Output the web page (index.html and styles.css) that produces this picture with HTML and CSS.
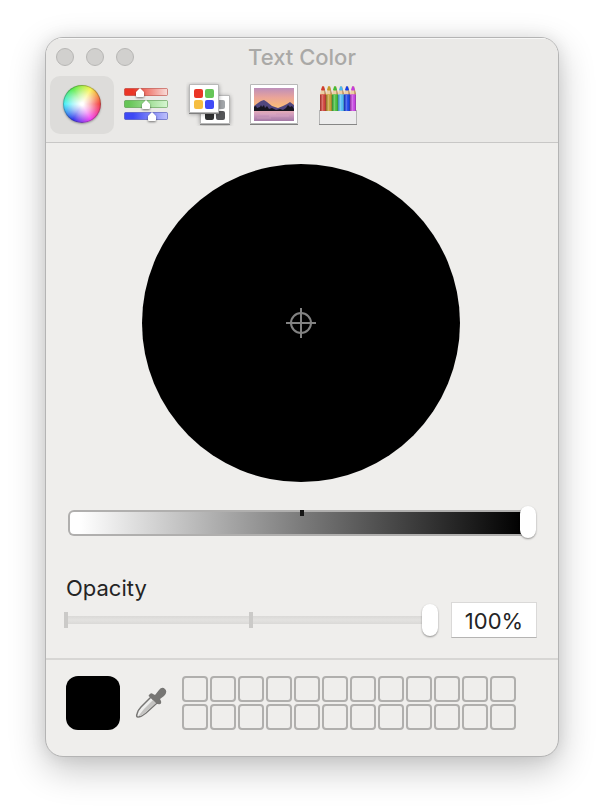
FILE: index.html
```html
<!DOCTYPE html>
<html lang="en">
<head>
<meta charset="utf-8">
<meta name="viewport" content="width=device-width, initial-scale=1">
<title>Text Color</title>
<link rel="stylesheet" href="styles.css">
</head>
<body>
<main class="window">
  <header class="header">
    <div class="titlebar">
      <div class="lights">
        <button class="light" type="button" aria-label="Close"></button>
        <button class="light" type="button" aria-label="Minimize"></button>
        <button class="light" type="button" aria-label="Zoom"></button>
      </div>
      <h1 class="title">Text Color</h1>
    </div>
    <nav class="toolbar" aria-label="Color pickers">
      <button class="tab tab-active" type="button" aria-label="Color Wheel"><span class="wheel-icon"></span></button>
      <button class="tab" type="button" aria-label="Color Sliders">
        <svg class="icon" width="48" height="44" viewBox="0 0 48 44">
          <defs>
            <linearGradient id="red"><stop offset=".2" stop-color="#ea3526"/><stop offset="1" stop-color="#f8dedb"/></linearGradient>
            <linearGradient id="green"><stop offset=".1" stop-color="#66c557"/><stop offset="1" stop-color="#d7f6d2"/></linearGradient>
            <linearGradient id="blue"><stop offset=".2" stop-color="#3d49f5"/><stop offset="1" stop-color="#bfc1fb"/></linearGradient>
          </defs>
          <rect x="2.5" y="6.5" width="43" height="7" rx="1" fill="url(#red)" stroke="#b3261b" stroke-opacity=".5"/>
          <rect x="2.5" y="18.5" width="43" height="7" rx="1" fill="url(#green)" stroke="#3b8a30" stroke-opacity=".5"/>
          <rect x="2.5" y="30.5" width="43" height="7" rx="1" fill="url(#blue)" stroke="#2b33b0" stroke-opacity=".5"/>
          <g class="knobs">
            <path d="M18 6 22 10V14Q22 15 21 15H15Q14 15 14 14V10Z"/>
            <path d="M24 18 28 22V26Q28 27 27 27H21Q20 27 20 26V22Z"/>
            <path d="M30 30 34 34V38Q34 39 33 39H27Q26 39 26 38V34Z"/>
          </g>
        </svg>
      </button>
      <button class="tab" type="button" aria-label="Color Palettes">
        <svg class="icon" width="48" height="44" viewBox="0 0 48 44">
          <g class="card"><path d="M14.500 13.500h29v28h-29z" fill="#fff" stroke="#b8b8b8"/></g>
          <path d="M14 42.500h30" stroke="#808080"/>
          <rect x="30" y="18" width="9" height="9" rx="2" fill="#a2a6aa"/>
          <rect x="19" y="29" width="9" height="9" rx="2" fill="#303132"/>
          <rect x="30" y="29" width="9" height="9" rx="2" fill="#555659"/>
          <g class="card"><path d="M3.500 2.500h29v28h-29z" fill="#fff" stroke="#b8b8b8"/></g>
          <path d="M3 31.500h30" stroke="#808080"/>
          <rect x="8" y="7" width="9" height="9" rx="2" fill="#ea3526"/>
          <rect x="19" y="7" width="9" height="9" rx="2" fill="#66c557"/>
          <rect x="8" y="18" width="9" height="9" rx="2" fill="#f6be41"/>
          <rect x="19" y="18" width="9" height="9" rx="2" fill="#404bf6"/>
        </svg>
      </button>
      <button class="tab" type="button" aria-label="Image Palettes">
        <svg class="icon" width="48" height="44" viewBox="0 0 48 44">
          <defs>
            <linearGradient id="sky" x2="0" y2="1"><stop stop-color="#bd8fba"/><stop offset=".4" stop-color="#e9a39a"/><stop offset=".75" stop-color="#f8b77c"/><stop offset="1" stop-color="#ffd68b"/></linearGradient>
            <linearGradient id="lake" x2="0" y2="1"><stop stop-color="#e5acb8"/><stop offset=".4" stop-color="#cf9abc"/><stop offset="1" stop-color="#a378a5"/></linearGradient>
          </defs>
          <path d="M.5 2.500h47v39H.5z" fill="#fff" stroke="#b8b8b8"/>
          <path d="M0 42.500h48" stroke="#808080"/>
          <path d="M4 6h40v23H4z" fill="url(#sky)"/>
          <path d="M4 28v-4l4-3 3-2 3-1 3 2 5 4 6 2 5-2 4-2 3-2 4 3v5z" fill="#52477e"/>
          <path d="M4 30v-5l2-1 1 2 3-1 1-2 1 2 2-2 1 3 2-2 2 3 3-1 4 2 4-1 3 1 3-2 2-3 2 2 2-1 2 3v4z" fill="#17151f"/>
          <path d="M4 29h40v10H4z" fill="url(#lake)"/>
          <path d="M10 32h16M19 34h20M7 36h14" stroke="#f3c5cc" stroke-opacity=".3"/>
        </svg>
      </button>
      <button class="tab" type="button" aria-label="Pencils">
        <svg class="icon" width="48" height="44" viewBox="0 0 48 44">
          <defs>
            <linearGradient id="shade"><stop stop-color="#000" stop-opacity=".25"/><stop offset=".4" stop-color="#fff" stop-opacity=".3"/><stop offset=".7" stop-color="#fff" stop-opacity="0"/><stop offset="1" stop-color="#000" stop-opacity=".4"/></linearGradient>
            <g id="pencil"><path d="M2 4 4 4 6 12V14H0V12Z" fill="#edcea4"/><path d="M4 4 6 12V14H4.500Z" fill="#b98a5c"/><path d="M1 8 2 5Q3 3 4 5L5 8Q3 9 1 8Z" fill="currentColor"/><path d="M0 13Q1 11 2 13 3 11 4 13 5 11 6 13V30H0Z" fill="currentColor"/><path d="M0 13H6V30H0Z" fill="url(#shade)"/></g>
          </defs>
          <g class="pencil-red"><use href="#pencil" x="6"/></g>
          <g class="pencil-gold"><use href="#pencil" x="12"/></g>
          <g class="pencil-green"><use href="#pencil" x="18"/></g>
          <g class="pencil-sky"><use href="#pencil" x="24"/></g>
          <g class="pencil-blue"><use href="#pencil" x="30"/></g>
          <g class="pencil-pink"><use href="#pencil" x="36"/></g>
          <path d="M5.500 28V42M42.500 28V42" stroke="#b5b5b5"/>
          <path d="M6 29h36v13H6z" fill="#ececec"/>
          <path d="M5 42.500h38" stroke="#868686"/>
        </svg>
      </button>
    </nav>
  </header>

  <section class="picker">
    <div class="disc">
      <svg width="30" height="30" viewBox="0 0 30 30" fill="none" stroke="#828282" stroke-width="2"><circle cx="15" cy="15" r="10"/><path d="M15 0V30M0 15H30"/></svg>
    </div>
    <input class="range brightness" type="range" min="0" max="100" value="100" aria-label="Brightness">
    <label class="label" for="opacity">Opacity</label>
    <div class="opacity-row">
      <input class="range opacity" id="opacity" type="range" min="0" max="100" value="100">
      <input class="percent" type="text" value="100%" aria-label="Opacity value">
    </div>
  </section>

  <footer class="footer">
    <button class="swatch" type="button" aria-label="Current color"></button>
    <button class="dropper" type="button" aria-label="Pick color from screen">
      <svg class="dropper-icon" width="32" height="32" viewBox="0 0 32 32">
        <path d="M16 10 22 16 11 26Q6 30 3 30 1 30 2 27 3 23 6 20Z" fill="#eeeeed" stroke="#777674" stroke-width="1.500"/>
        <path d="M19 12 22 15 10 26Q6 29 3 29.500L9 22Z" fill="#c4c3c1"/>
        <path d="M14 8Q16 5 18 7L20 8 24 3Q27-1 30 2 33 5 29 9L25 12 26 14Q27 18 23 17L22 17 15 10Q13 9 14 8Z" fill="#777674"/>
      </svg>
    </button>
    <div class="wells">
      <button class="well" type="button" aria-label="Saved color 1"></button>
      <button class="well" type="button" aria-label="Saved color 2"></button>
      <button class="well" type="button" aria-label="Saved color 3"></button>
      <button class="well" type="button" aria-label="Saved color 4"></button>
      <button class="well" type="button" aria-label="Saved color 5"></button>
      <button class="well" type="button" aria-label="Saved color 6"></button>
      <button class="well" type="button" aria-label="Saved color 7"></button>
      <button class="well" type="button" aria-label="Saved color 8"></button>
      <button class="well" type="button" aria-label="Saved color 9"></button>
      <button class="well" type="button" aria-label="Saved color 10"></button>
      <button class="well" type="button" aria-label="Saved color 11"></button>
      <button class="well" type="button" aria-label="Saved color 12"></button>
      <button class="well" type="button" aria-label="Saved color 13"></button>
      <button class="well" type="button" aria-label="Saved color 14"></button>
      <button class="well" type="button" aria-label="Saved color 15"></button>
      <button class="well" type="button" aria-label="Saved color 16"></button>
      <button class="well" type="button" aria-label="Saved color 17"></button>
      <button class="well" type="button" aria-label="Saved color 18"></button>
      <button class="well" type="button" aria-label="Saved color 19"></button>
      <button class="well" type="button" aria-label="Saved color 20"></button>
      <button class="well" type="button" aria-label="Saved color 21"></button>
      <button class="well" type="button" aria-label="Saved color 22"></button>
      <button class="well" type="button" aria-label="Saved color 23"></button>
      <button class="well" type="button" aria-label="Saved color 24"></button>
    </div>
  </footer>
</main>
</body>
</html>
```
FILE: styles.css
```css
* {
  box-sizing: border-box;
}

body {
  min-height: 100vh;
  margin: 0;
  padding: 37px 45px;
  background: #fff;
  color: #242424;
  font-family: Inter, "Liberation Sans", sans-serif;
  font-size: 22px;
  line-height: 28px;
}

button,
input {
  margin: 0;
  padding: 0;
  border: 0;
  background: none;
  color: inherit;
  font: inherit;
}

svg {
  display: block;
}

.window {
  overflow: hidden;
  border: 1px solid #b4b4b4;
  border-radius: 18px;
  background: #efeeec;
  box-shadow: 0 12px 36px rgba(0, 0, 0, 0.24), 0 0 16px rgba(0, 0, 0, 0.08);
}

.header {
  padding-bottom: 8px;
  border-bottom: 1px solid #c8c7c6;
  background: #eae9e7;
  box-shadow: inset 0 1px #f7f7f6;
}

.titlebar {
  display: grid;
  grid-template-columns: 1fr auto 1fr;
  align-items: center;
  height: 38px;
  padding: 0 10px;
}

.lights {
  display: flex;
  gap: 12px;
}

.light {
  width: 18px;
  height: 18px;
  border: 1px solid #b7b6b4;
  border-radius: 50%;
  background: #d1d0ce;
}

.title {
  margin: 0;
  color: #aaa9a7;
  font-size: 22px;
  font-weight: 500;
}

.toolbar {
  display: flex;
  padding: 0 4px;
}

.tab {
  display: grid;
  place-items: center;
  width: 64px;
  height: 58px;
  padding-bottom: 2px;
  border-radius: 10px;
}

.tab-active {
  background: #dddcda;
}

.wheel-icon {
  width: 38px;
  height: 38px;
  border: 1px solid rgba(60, 60, 60, 0.35);
  border-radius: 50%;
  background:
    radial-gradient(circle, #fff 5%, rgba(255, 255, 255, 0.6) 35%, transparent 72%),
    conic-gradient(from 90deg, #f22c2c, #f02df0, #1c24ea, #35eef5, #49e936, #f8f13a, #f22c2c);
  background-origin: border-box;
  box-shadow: 0 1px 2px rgba(0, 0, 0, 0.3);
}

.knobs {
  fill: #fff;
  filter: drop-shadow(0 1px 1px rgba(0, 0, 0, 0.5));
}

.card {
  filter: drop-shadow(0 1px 2px rgba(0, 0, 0, 0.35));
}

.pencil-red { color: #cf3b32; }
.pencil-gold { color: #c49b29; }
.pencil-green { color: #41bd37; }
.pencil-sky { color: #4ab9f2; }
.pencil-blue { color: #143de8; }
.pencil-pink { color: #c43bdf; }

.picker {
  padding: 21px 22px 20px 20px;
  border-bottom: 2px solid #d7d6d4;
}

.disc {
  display: grid;
  place-items: center;
  width: 318px;
  max-width: 100%;
  aspect-ratio: 1;
  margin: 0 auto;
  border-radius: 50%;
  background: #000;
}

.range {
  display: block;
  appearance: none;
  -webkit-appearance: none;
  height: 32px;
}

.range::-webkit-slider-thumb {
  -webkit-appearance: none;
  width: 16px;
  height: 32px;
  border-radius: 8px;
  background: #fff;
  box-shadow: 0 1px 2px rgba(0, 0, 0, 0.4);
}

.brightness {
  width: calc(100% - 2px);
  margin: 25px 0 35px 2px;
}

.brightness::-webkit-slider-runnable-track {
  height: 26px;
  border: 2px solid transparent;
  border-right: 0;
  border-radius: 6px 12px 12px 6px;
  background:
    linear-gradient(#161616, #161616) center top / 4px 6px no-repeat border-box,
    linear-gradient(90deg, #fff 2%, #7a7a7a 50%, #000 97%) padding-box,
    #b0afae;
}

.brightness::-webkit-slider-thumb {
  margin-top: -6px;
}

.label {
  display: block;
  width: max-content;
}

.opacity-row {
  display: flex;
  align-items: center;
  gap: 13px;
  margin: 0 -1px 0 -2px;
}

.opacity {
  flex: 1;
  min-width: 0;
  background:
    linear-gradient(#cbcac8, #cbcac8) left center / 4px 16px no-repeat,
    linear-gradient(#cbcac8, #cbcac8) center / 4px 16px no-repeat,
    linear-gradient(#dad9d7, #e3e2e0 50%, #dad9d7) center / 100% 8px no-repeat;
}

.percent {
  width: 86px;
  height: 36px;
  padding-top: 2px;
  border: 1px solid #dad9d8;
  border-bottom-color: #b5b4b3;
  background: #fff;
  text-align: center;
}

.footer {
  display: flex;
  align-items: center;
  gap: 15px;
  padding: 16px 20px 26px;
}

.swatch {
  width: 54px;
  height: 54px;
  border-radius: 12px;
  background: #000;
}

.wells {
  display: grid;
  grid-template-columns: repeat(12, 26px);
  gap: 2px;
}

.well {
  height: 26px;
  border: 2px solid #b0afad;
  border-radius: 4px;
}
```
